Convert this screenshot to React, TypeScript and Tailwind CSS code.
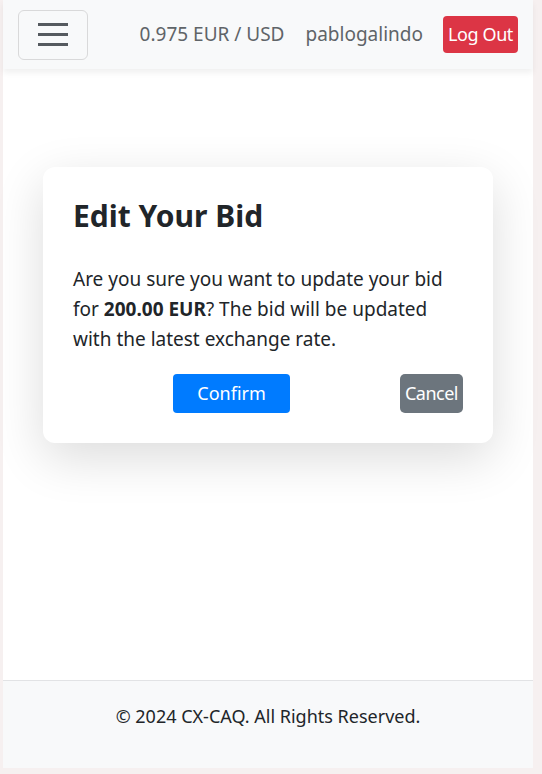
import React from "react";

export default function App() {
  const font = { fontFamily: '"Noto Sans", "Open Sans", sans-serif' };
  return (
    <div className="w-[542px] h-[774px] bg-[#f6f0f0] pl-[3px] pr-[9px] pb-[6px]" style={font}>
      <div className="flex h-[768px] flex-col bg-white">
        <nav className="relative z-10 flex h-[69px] items-center bg-[#f8f9fa] pl-[15px] pr-[15px] shadow-[0_4px_6px_rgba(0,0,0,0.06)]">
          <button className="flex h-[50px] w-[70px] flex-col items-center justify-center gap-[7px] rounded-[6px] border border-[#d9d9da]">
            <span className="block h-[3px] w-[30px] bg-[#555a5f]" />
            <span className="block h-[3px] w-[30px] bg-[#555a5f]" />
            <span className="block h-[3px] w-[30px] bg-[#555a5f]" />
          </button>
          <div className="ml-auto flex items-center">
            <span className="text-[19px] text-[#5f6468]">0.975 EUR / USD</span>
            <span className="ml-[21px] text-[19px] text-[#5f6468]">pablogalindo</span>
            <button className="ml-[20px] h-[37px] w-[75px] rounded-[4px] bg-[#dc3545] text-[18px] tracking-[-0.4px] text-white">Log Out</button>
          </div>
        </nav>
        <main className="flex-1 pt-[98px]">
          <div className="mx-[40px] rounded-[12px] bg-white px-[30px] pt-[31px] pb-[30px] shadow-[0_15px_50px_rgba(0,0,0,0.14)]">
            <h2 className="text-[30px] font-bold leading-[36px] text-[#212529]">Edit Your Bid</h2>
            <p className="mt-[30px] text-[19px] leading-[30px] text-[#212529]">
              Are you sure you want to update your bid for <b>200.00 EUR</b>? The bid will be updated with the latest exchange rate.
            </p>
            <div className="mt-[20px] flex items-center">
              <button className="ml-[100px] h-[39px] w-[117px] rounded-[4px] bg-[#007bff] text-[18px] text-white">Confirm</button>
              <button className="ml-auto h-[39px] w-[63px] rounded-[5px] bg-[#6c757d] text-[18px] tracking-[-0.5px] text-white">Cancel</button>
            </div>
          </div>
        </main>
        <footer className="h-[88px] border-t border-[#e2e3e5] bg-[#f8f9fa] pt-[20px] text-center">
          <span className="text-[18px] leading-[30px] text-[#212529]">© 2024 CX-CAQ. All Rights Reserved.</span>
        </footer>
      </div>
    </div>
  );
}
